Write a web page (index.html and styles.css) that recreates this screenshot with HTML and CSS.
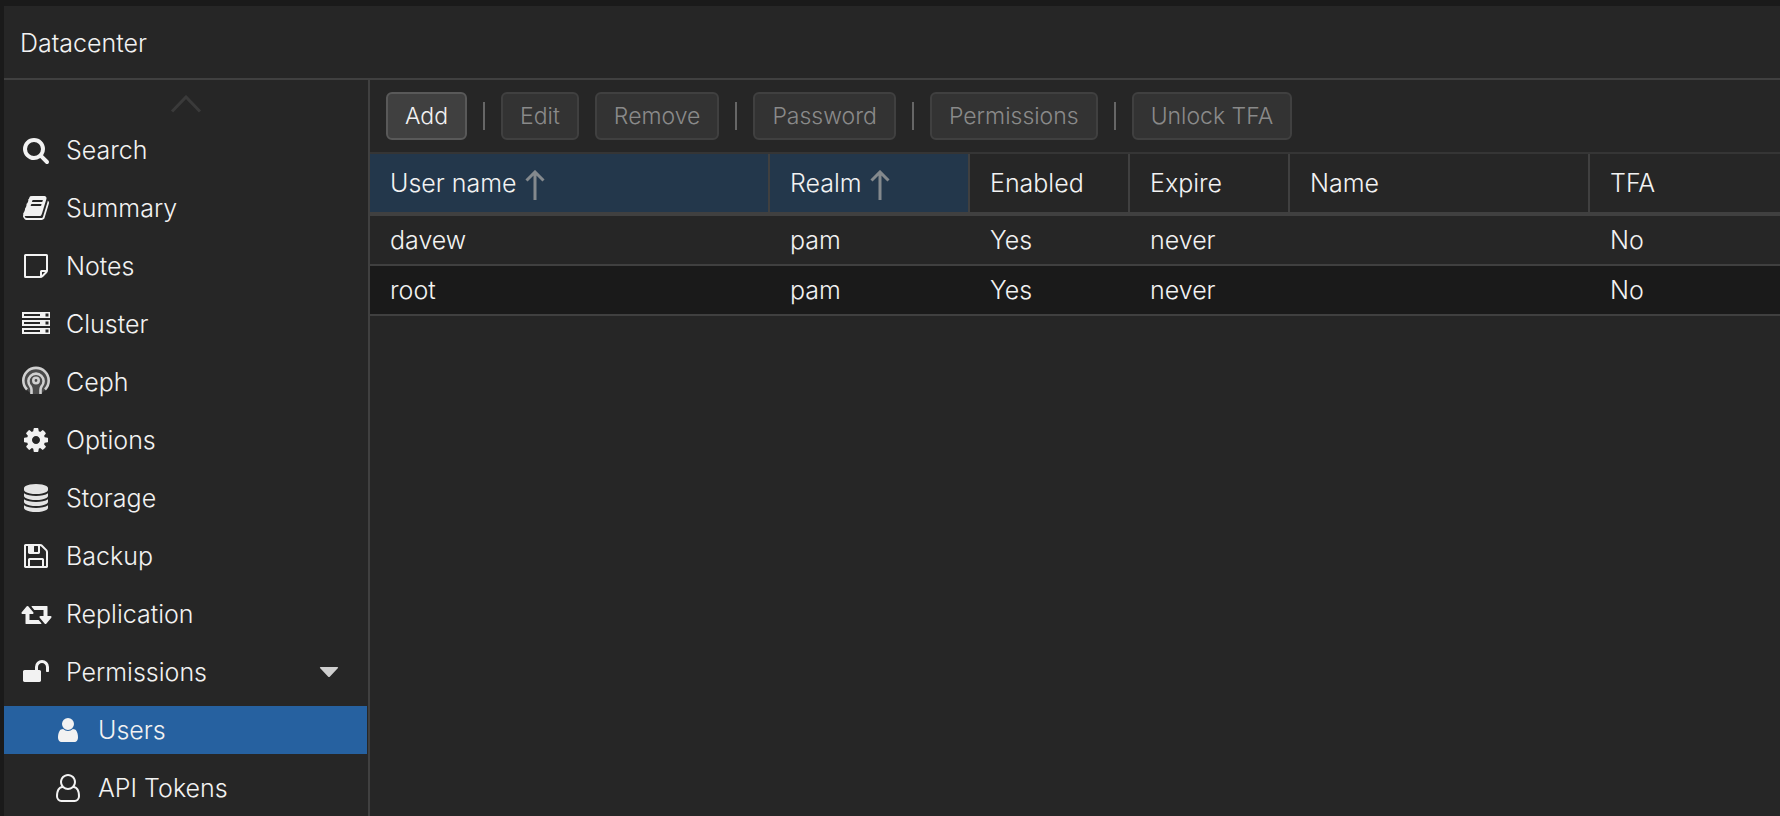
FILE: index.html
```html
<!DOCTYPE html>
<html lang="en">
<head>
<meta charset="utf-8">
<title>Datacenter</title>
<link rel="stylesheet" href="styles.css">
</head>
<body>
<div class="app">
  <header class="app-header"><h1 class="title">Datacenter</h1></header>
  <div class="body">
    <nav class="sidebar" aria-label="Datacenter">
      <button class="scroll-up" type="button" aria-label="Scroll up">
        <svg class="scroll-icon" viewBox="0 0 32 18"><path d="M2 16.500L16 2L30 16.500"/></svg>
      </button>
      <ul class="menu">
        <li><a class="item" href="#"><svg class="icon" viewBox="0 0 1792 1792"><path d="M1216 832q0-185-131.500-316.500t-316.500-131.500-316.500 131.500-131.500 316.500 131.500 316.500 316.500 131.500 316.500-131.500 131.500-316.500zm512 832q0 52-38 90t-90 38q-54 0-90-38l-343-342q-179 124-399 124-143 0-273.500-55.500t-225-150-150-225-55.500-273.500 55.500-273.500 150-225 225-150 273.500-55.500 273.500 55.500 225 150 150 225 55.500 273.500q0 220-124 399l343 343q37 37 37 90z"/></svg>Search</a></li>
        <li><a class="item" href="#"><svg class="icon" viewBox="0 0 1792 1792"><path d="M1703 478q40 57 18 129l-275 906q-19 64-76.500 107.500t-122.500 43.500h-923q-77 0-148.500-53.500t-99.500-131.500q-24-67-2-127 0-4 3-27t4-37q1-8-3-21.500t-3-19.500q2-11 8-21t16.500-23.500 16.500-23.500q23-38 45-91.500t30-91.500q3-10 .5-30t-.5-28q3-11 17-28t17-23q21-36 42-92t25-90q1-9-2.500-32t.5-28q4-13 22-30.500t22-22.500q19-26 42.500-84.500t27.500-96.500q1-8-3-25.500t-2-26.500q2-8 9-18t18-23 17-21q8-12 16.500-30.500t15-35 16-36 19.500-32 26.500-23.500 36-11.500 47.500 5.500l-1 3q38-9 51-9h761q74 0 114 56t18 130l-274 906q-36 119-71.500 153.500t-128.500 34.500h-869q-27 0-38 15-11 16-1 43 24 70 144 70h923q29 0 56-15.500t35-41.500l300-987q7-22 5-57 38 15 59 43zm-1064 2q-4 13 2 22.500t20 9.500h608q13 0 25.500-9.500t16.500-22.500l21-64q4-13-2-22.500t-20-9.500h-608q-13 0-25.500 9.500t-16.500 22.500zm-83 256q-4 13 2 22.500t20 9.500h608q13 0 25.500-9.500t16.500-22.500l21-64q4-13-2-22.500t-20-9.500h-608q-13 0-25.500 9.500t-16.500 22.500z"/></svg>Summary</a></li>
        <li><a class="item" href="#"><svg class="icon line" viewBox="0 0 28 28"><path d="M18 25H3.500Q3 25 3 24.500V3.500Q3 3 3.500 3H24.500Q25 3 25 3.500V18.500Q25 19.500 24 20.500L20.500 24Q19.500 25 18 25ZM19 25V19.500Q19 19 19.500 19H25"/></svg>Notes</a></li>
        <li><a class="item" href="#"><svg class="icon" viewBox="0 0 28 28"><path fill-rule="evenodd" d="M0 2H28V8H0ZM2 4V6H18V4ZM23.500 3.500V6.500H26.500V3.500ZM0 10H28V16H0ZM2 12V14H18V12ZM23.500 11.500V14.500H26.500V11.500ZM0 18H28V24H0ZM2 20V22H18V20ZM23.500 19.500V22.500H26.500V19.500Z"/></svg>Cluster</a></li>
        <li><a class="item" href="#"><svg class="icon ceph" viewBox="0 2 28 28"><path class="disc" d="M4 23A13 13 0 1 1 24 23L19 28H9Z"/><path d="M5 23.500A12.700 12.700 0 1 1 23 23.500M9.500 28V24Q9.500 22 8.500 20.500A7.600 7.600 0 1 1 19.500 20.500Q18.500 22 18.500 24V28"/><circle cx="14" cy="14.500" r="2.700"/></svg>Ceph</a></li>
        <li><a class="item" href="#"><svg class="icon" viewBox="0 0 1792 1792"><path d="M1152 896q0-106-75-181t-181-75-181 75-75 181 75 181 181 75 181-75 75-181zm512-109v222q0 12-8 23t-20 13l-185 28q-19 54-39 91 35 50 107 138 10 12 10 25t-9 23q-27 37-99 108t-94 71q-12 0-26-9l-138-108q-44 23-91 38-16 136-29 186-7 28-36 28h-222q-14 0-24.500-8.500t-11.500-21.500l-28-184q-49-16-90-37l-141 107q-10 9-25 9-14 0-25-11-126-114-165-168-7-10-7-23 0-12 8-23 15-21 51-66.500t54-70.500q-27-50-41-99l-183-27q-13-2-21-12.500t-8-23.500v-222q0-12 8-23t19-13l186-28q14-46 39-92-40-57-107-138-10-12-10-24 0-10 9-23 26-36 98.500-107.500t94.500-71.500q13 0 26 10l138 107q44-23 91-38 16-136 29-186 7-28 36-28h222q14 0 24.500 8.500t11.500 21.500l28 184q49 16 90 37l142-107q9-9 24-9 13 0 25 10 129 119 165 170 7 8 7 22 0 12-8 23-15 21-51 66.500t-54 70.500q26 50 41 98l183 28q13 2 21 12.500t8 23.500z"/></svg>Options</a></li>
        <li><a class="item" href="#"><svg class="icon dim" viewBox="0 0 1792 1792"><path d="M896 768q237 0 443-43t325-127v170q0 69-103 128t-280 93.500-385 34.500-385-34.500-280-93.500-103-128v-170q119 84 325 127t443 43zm0 768q237 0 443-43t325-127v170q0 69-103 128t-280 93.500-385 34.500-385-34.500-280-93.500-103-128v-170q119 84 325 127t443 43zm0-384q237 0 443-43t325-127v170q0 69-103 128t-280 93.500-385 34.500-385-34.500-280-93.500-103-128v-170q119 84 325 127t443 43zm0-1152q208 0 385 34.500t280 93.500 103 128v128q0 69-103 128t-280 93.500-385 34.500-385-34.500-280-93.500-103-128v-128q0-69 103-128t280-93.500 385-34.500z"/></svg>Storage</a></li>
        <li><a class="item" href="#"><svg class="icon" viewBox="0 0 1792 1792"><path d="M512 1536h768v-384h-768v384zm896 0h128v-896q0-14-10-38.500t-20-34.500l-281-281q-10-10-34-20t-39-10v416q0 40-28 68t-68 28h-576q-40 0-68-28t-28-68v-416h-128v1280h128v-416q0-40 28-68t68-28h832q40 0 68 28t28 68v416zm-384-928v-320q0-13-9.500-22.500t-22.500-9.500h-192q-13 0-22.500 9.500t-9.500 22.500v320q0 13 9.500 22.500t22.500 9.500h192q13 0 22.500-9.500t9.500-22.500zm640 32v928q0 40-28 68t-68 28h-1344q-40 0-68-28t-28-68v-1344q0-40 28-68t68-28h928q40 0 88 20t76 48l280 280q28 28 48 76t20 88z"/></svg>Backup</a></li>
        <li><a class="item" href="#"><svg class="icon" viewBox="96 0 1792 1792"><path d="M1344 1504q0 13-9.500 22.500t-22.500 9.500h-960q-8 0-13.500-2t-9-7-5.500-8-3-11.500-1-11.500v-600h-192q-26 0-45-19t-19-45q0-24 15-41l320-384q19-22 49-22t49 22l320 384q15 17 15 41 0 26-19 45t-45 19h-192v384h576q16 0 25 11l160 192q7 10 7 21zm640-416q0 24-15 41l-320 384q-20 23-49 23t-49-23l-320-384q-15-17-15-41 0-26 19-45t45-19h192v-384h-576q-16 0-25-12l-160-192q-7-9-7-20 0-13 9.500-22.500t22.500-9.500h960q8 0 13.500 2t9 7 5.500 8 3 11.500 1 11.500v600h192q26 0 45 19t19 45z"/></svg>Replication</a></li>
        <li><a class="item" href="#"><svg class="icon" viewBox="0 0 1792 1792"><path d="M1728 576v256q0 26-19 45t-45 19h-64q-26 0-45-19t-19-45v-256q0-106-75-181t-181-75-181 75-75 181v192h96q40 0 68 28t28 68v576q0 40-28 68t-68 28h-960q-40 0-68-28t-28-68v-576q0-40 28-68t68-28h672v-192q0-185 131.500-316.500t316.500-131.500 316.500 131.500 131.500 316.500z"/></svg>Permissions<svg class="caret" viewBox="0 0 20 12"><path d="M1.500 1H18.500Q19.500 1.500 19 2L11 10.500Q10 11.500 9 10.500L1 2Q.5 1.500 1.500 1Z"/></svg></a>
          <ul class="menu submenu">
            <li><a class="item sub selected" href="#" aria-current="page"><svg class="icon" viewBox="0 0 1792 1792"><path d="M1536 1399q0 109-62.500 187t-150.500 78h-854q-88 0-150.500-78t-62.500-187q0-85 8.500-160.500t31.500-152 58.500-131 94-89 134.500-34.500q131 128 313 128t313-128q76 0 134.500 34.500t94 89 58.500 131 31.500 152 8.500 160.500zm-256-887q0 159-112.500 271.500t-271.500 112.500-271.500-112.500-112.500-271.500 112.500-271.500 271.500-112.500 271.500 112.500 112.500 271.500z"/></svg>Users</a></li>
            <li><a class="item sub" href="#"><svg class="icon" viewBox="-128 0 1792 1792"><path d="M1201 784q47 14 89.500 38t89 73 79.500 115.500 55 172 22 236.500q0 154-100 263.500t-241 109.500h-854q-141 0-241-109.500t-100-263.500q0-131 22-236.500t55-172 79.500-115.500 89-73 89.500-38q-79-125-79-272 0-104 40.500-198.500t109.500-163.500 163.500-109.500 198.500-40.500 198.500 40.500 163.500 109.500 109.500 163.500 40.500 198.500q0 147-79 272zm-433-656q-159 0-271.500 112.500t-112.500 271.500 112.500 271.500 271.500 112.500 271.500-112.500 112.500-271.500-112.500-271.500-271.500-112.500zm427 1536q88 0 150.500-71.500t62.500-173.500q0-239-78.500-377t-225.500-145q-145 127-336 127t-336-127q-147 7-225.500 145t-78.500 377q0 102 62.500 173.500t150.500 71.500h854z"/></svg>API Tokens</a></li>
          </ul>
        </li>
      </ul>
    </nav>
    <main class="content">
      <div class="toolbar" role="toolbar">
        <button class="btn" type="button">Add</button>
        <span class="sep"></span>
        <button class="btn" type="button" disabled>Edit</button>
        <button class="btn" type="button" disabled>Remove</button>
        <span class="sep"></span>
        <button class="btn" type="button" disabled>Password</button>
        <span class="sep"></span>
        <button class="btn" type="button" disabled>Permissions</button>
        <span class="sep"></span>
        <button class="btn" type="button" disabled>Unlock TFA</button>
      </div>
      <table class="grid">
        <colgroup><col class="col-user"><col class="col-realm"><col class="col-flag"><col class="col-flag"><col class="col-name"><col></colgroup>
        <thead>
          <tr>
            <th class="sorted" aria-sort="ascending">User name<svg class="arrow" viewBox="0 0 20 30"><path d="M1.500 10.500L10 2L18.500 10.500M10 2V30"/></svg></th>
            <th class="sorted" aria-sort="ascending">Realm<svg class="arrow" viewBox="0 0 20 30"><path d="M1.500 10.500L10 2L18.500 10.500M10 2V30"/></svg></th>
            <th>Enabled</th><th>Expire</th><th>Name</th><th>TFA</th>
          </tr>
        </thead>
        <tbody>
          <tr><td>davew</td><td>pam</td><td>Yes</td><td>never</td><td></td><td>No</td></tr>
          <tr><td>root</td><td>pam</td><td>Yes</td><td>never</td><td></td><td>No</td></tr>
        </tbody>
      </table>
    </main>
  </div>
</div>
</body>
</html>
```
FILE: styles.css
```css
* { box-sizing: border-box; }

body {
  margin: 0;
  background: #1a1a1a;
  color: #f2f2f2;
  font-family: Inter, "Liberation Sans", sans-serif;
  font-size: 25px;
  font-weight: 300;
  line-height: 32px;
}

.app {
  display: flex;
  flex-direction: column;
  height: 100vh;
  padding: 6px 0 0 4px;
  overflow: hidden;
}

.app-header {
  flex: none;
  padding: 21px 16px 19px;
  background: #262626;
  border-bottom: 2px solid #404040;
}

.title { margin: 0; font-size: inherit; font-weight: inherit; }

.body { display: flex; flex: 1; min-height: 0; background: #262626; }

.sidebar {
  flex: none;
  width: 366px;
  padding-right: 1px;
  border-right: 2px solid #404040;
  overflow: hidden;
}

.scroll-up {
  display: flex;
  justify-content: center;
  width: 100%;
  height: 46px;
  padding: 15px 0 0;
  background: none;
  border: 0;
}

.scroll-icon { width: 32px; height: 18px; fill: none; stroke: #3a3a3a; stroke-width: 3; }

.menu { display: flex; flex-direction: column; gap: 10px; margin: 0; padding: 0; list-style: none; }
.submenu { margin-top: 10px; }

.item {
  display: flex;
  align-items: center;
  gap: 16px;
  height: 48px;
  padding: 0 28px 0 18px;
  color: inherit;
  text-decoration: none;
}

.sub { padding-left: 50px; }
.selected { background: #2661a0; }

.icon { flex: none; width: 28px; height: 28px; fill: #f2f2f2; overflow: visible; }
.line { fill: none; stroke: #f2f2f2; stroke-width: 2; }
.dim { fill: #e4e4e4; }
.ceph { fill: none; stroke: #d0d0d0; stroke-width: 2.6; }
.disc { fill: #4a4a4a; stroke: none; }
.caret { width: 20px; height: 12px; margin-left: auto; fill: #cfcfcf; }

.content { flex: 1; min-width: 0; }

.toolbar {
  display: flex;
  align-items: center;
  gap: 16px;
  padding: 12px 16px;
  border-bottom: 2px solid #353535;
}

.btn {
  height: 48px;
  padding: 0 17px;
  background: #404040;
  border: 2px solid #595959;
  border-radius: 6px;
  color: #f2f2f2;
  font: inherit;
  font-size: 23px;
}

.btn:disabled { background: #333; border-color: #404040; color: #8a8a8a; }
.sep { width: 2px; height: 28px; background: #666; }

.grid { width: 100%; border-collapse: separate; border-spacing: 0; table-layout: fixed; }
.col-user { width: 400px; }
.col-realm { width: 200px; }
.col-flag { width: 160px; }
.col-name { width: 300px; }

.grid th, .grid td { padding: 8px 20px; text-align: left; font-weight: inherit; white-space: nowrap; }
.grid th { padding: 13px 20px; border-right: 2px solid #404040; border-bottom: 4px solid #404040; }
.grid th:last-child { border-right: 0; }
.grid td { border-bottom: 2px solid #404040; }
.grid tbody tr:nth-child(even) { background: #1a1a1a; }
.grid .sorted { background: #23374b; }

.arrow { width: 20px; height: 30px; margin: -4px 0 -4px 8px; vertical-align: middle; fill: none; stroke: #84898d; stroke-width: 3; }
```
